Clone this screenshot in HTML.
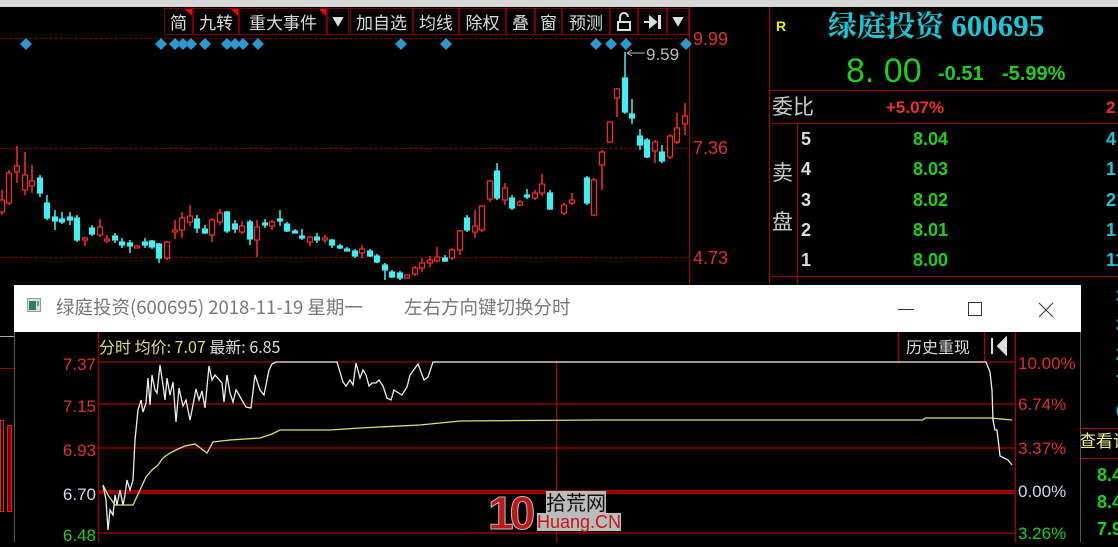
<!DOCTYPE html>
<html><head><meta charset="utf-8"><style>
*{margin:0;padding:0;box-sizing:border-box}
body{width:1118px;height:542px;overflow:hidden;background:#000;position:relative;font-family:"Liberation Sans","Noto Sans CJK SC",sans-serif}
.a{position:absolute;white-space:nowrap;line-height:1}
.btn{position:absolute;top:8px;height:27px;border:1px solid #7a0000;color:#ddd;font-size:17px;line-height:25px;text-align:center;font-family:"Noto Sans CJK SC",sans-serif}
.tri{position:absolute;top:0;right:0;width:0;height:0;border-top:7px solid #f00;border-left:7px solid transparent}
.cj{font-family:"Noto Sans CJK SC",sans-serif}
</style></head><body>
<div class="a" style="left:0;top:0;width:1118px;height:7px;background:#d8d8d8"></div>
<svg class="a" style="left:0;top:0" width="1118" height="542">
<g stroke="#a00" stroke-dasharray="2,3" stroke-width="1">
<line x1="0" y1="38.5" x2="689" y2="38.5"/><line x1="0" y1="148.5" x2="689" y2="148.5"/><line x1="0" y1="257.5" x2="689" y2="257.5"/>
</g>
<line x1="689.5" y1="7" x2="689.5" y2="290" stroke="#a00"/>
<line x1="769.5" y1="7" x2="769.5" y2="290" stroke="#a00"/>
<line x1="769" y1="90.5" x2="1118" y2="90.5" stroke="#a00"/>
<line x1="772" y1="123.5" x2="1118" y2="123.5" stroke="#a00"/>
<line x1="797.5" y1="123" x2="797.5" y2="290" stroke="#a00"/>
<line x1="772" y1="276.5" x2="1118" y2="276.5" stroke="#a00"/>
<g fill="#2a9ad0">
<path d="M0,-6L6,0L0,6L-6,0Z" transform="translate(26,44)"/>
<path d="M0,-6L6,0L0,6L-6,0Z" transform="translate(161,44)"/><path d="M0,-6L6,0L0,6L-6,0Z" transform="translate(175,44)"/><path d="M0,-6L6,0L0,6L-6,0Z" transform="translate(183,44)"/><path d="M0,-6L6,0L0,6L-6,0Z" transform="translate(191,44)"/><path d="M0,-6L6,0L0,6L-6,0Z" transform="translate(205,44)"/><path d="M0,-6L6,0L0,6L-6,0Z" transform="translate(227,44)"/><path d="M0,-6L6,0L0,6L-6,0Z" transform="translate(235,44)"/><path d="M0,-6L6,0L0,6L-6,0Z" transform="translate(243,44)"/><path d="M0,-6L6,0L0,6L-6,0Z" transform="translate(258,44)"/><path d="M0,-6L6,0L0,6L-6,0Z" transform="translate(401,44)"/><path d="M0,-6L6,0L0,6L-6,0Z" transform="translate(446,44)"/><path d="M0,-6L6,0L0,6L-6,0Z" transform="translate(596,44)"/><path d="M0,-6L6,0L0,6L-6,0Z" transform="translate(611,44)"/><path d="M0,-6L6,0L0,6L-6,0Z" transform="translate(626,44)"/><path d="M0,-6L6,0L0,6L-6,0Z" transform="translate(686,44)"/>
</g>
<g id="candles" stroke-width="1.5"></g>
<path d="M627,53H645M627,53l5,-3M627,53l5,3" stroke="#bbb" fill="none"/>
<text x="646" y="60" fill="#bbb" font-size="17" font-family="Liberation Sans">9.59</text>
</svg>
<div class="btn" style="left:164px;width:29px">简<i class="tri"></i></div>
<div class="btn" style="left:193px;width:46px">九转<i class="tri"></i></div>
<div class="btn" style="left:239px;width:88px">重大事件<i class="tri"></i></div>
<div class="btn" style="left:327px;width:22px;font-size:12px">▼</div>
<div class="btn" style="left:350px;width:63px">加自选</div>
<div class="btn" style="left:413px;width:46px">均线</div>
<div class="btn" style="left:459px;width:47px">除权</div>
<div class="btn" style="left:506px;width:29px">叠</div>
<div class="btn" style="left:535px;width:27px">窗</div>
<div class="btn" style="left:562px;width:48px">预测</div>
<div class="btn" style="left:610px;width:28px"><svg width="16" height="20" style="margin-top:3px"><path d="M4,9V5a4,4 0 0 1 8,0" stroke="#ddd" fill="none" stroke-width="2"/><rect x="2" y="10" width="12" height="8" stroke="#ddd" fill="none" stroke-width="2"/></svg></div>
<div class="btn" style="left:638px;width:29px"><svg width="20" height="16" style="margin-top:5px"><path d="M1,8H9M7,3l6,5l-6,5z" stroke="#ddd" fill="#ddd" stroke-width="2"/><rect x="15" y="1" width="3" height="14" fill="#ddd"/></svg></div>
<div class="btn" style="left:667px;width:22px;font-size:12px">▼</div>
<div class="a" style="left:693px;top:30px;color:#e03030;font-size:18px">9.99</div>
<div class="a" style="left:693px;top:139px;color:#e03030;font-size:18px">7.36</div>
<div class="a" style="left:693px;top:249px;color:#e03030;font-size:18px">4.73</div>
<div class="a" style="left:776px;top:19px;color:#ee0;font-size:14px;font-weight:bold">R</div>
<div class="a cj" style="left:828px;top:10px;color:#19c8d8;font-size:29px;font-weight:bold;font-family:'Noto Serif CJK SC',serif">绿庭投资 <span style="font-family:'Liberation Serif';font-size:31px">600695</span></div>
<div class="a" style="left:846px;top:54px;color:#1ed01e;font-size:34px">8.&nbsp;00</div>
<div class="a" style="left:938px;top:64px;color:#1ed01e;font-size:20px;font-weight:bold">-0.51</div>
<div class="a" style="left:1002px;top:64px;color:#1ed01e;font-size:20px;font-weight:bold">-5.99%</div>
<div class="a cj" style="left:772px;top:96px;color:#ccc;font-size:21px">委比</div>
<div class="a" style="left:886px;top:99px;color:#f03030;font-size:17px;font-weight:bold">+5.07%</div>
<div class="a" style="left:1106px;top:99px;color:#f03030;font-size:17px;font-weight:bold">2</div>
<div class="a cj" style="left:772px;top:162px;color:#ccc;font-size:21px">卖</div>
<div class="a cj" style="left:772px;top:211px;color:#ccc;font-size:21px">盘</div>
<div style="position:absolute;left:801px;top:124px;font-size:18px;font-weight:bold;line-height:30.3px">
<div style="color:#ddd;position:absolute;left:0">5<br>4<br>3<br>2<br>1</div>
<div style="color:#1ed01e;position:absolute;left:112px">8.04<br>8.03<br>8.02<br>8.01<br>8.00</div>
<div style="color:#19c8d8;position:absolute;left:305px">4<br>1<br>2<br>1<br>11</div>
</div>
<div class="a" style="left:1086px;top:282px;color:#19c8d8;font-size:18px;font-weight:bold;line-height:28.8px;width:40px;text-align:right;white-space:pre">3<br>3<br>2<br>7<br>6</div>
<div class="a" style="left:1080px;top:428px;width:38px;height:1px;background:#a00"></div>
<div class="a cj" style="left:1079px;top:431px;color:#ee8;font-size:17px">查看详</div>
<div class="a" style="left:1080px;top:458px;width:38px;height:1px;background:#a00"></div>
<div class="a" style="left:1097px;top:462px;color:#1ed01e;font-size:18px;font-weight:bold;line-height:27px">8.4<br>8.4<br>7.9</div>
<div class="a" style="left:0;top:336px;width:14px;height:1px;background:#aaa"></div>
<div class="a" style="left:0;top:368px;width:14px;height:1px;background:#a00"></div>
<div class="a" style="left:0;top:420px;width:4px;height:92px;border:1px solid #e02020"></div>
<div class="a" style="left:7px;top:425px;width:5px;height:87px;border:1px solid #e02020;background:#800"></div>
<div class="a" style="left:14px;top:285px;width:1067px;height:257px;background:#000;border-left:1px solid #555;border-right:1px solid #555"></div>
<div class="a" style="left:14px;top:285px;width:1067px;height:47px;background:#fff"></div>
<svg class="a" style="left:27px;top:298px" width="14" height="14"><rect x="0.5" y="0.5" width="13" height="13" fill="#ddd" stroke="#999"/><rect x="2" y="3" width="7" height="9" fill="#2a7a6a"/><rect x="10" y="3" width="2" height="5" fill="#4a8"/></svg>
<div class="a cj" style="left:56px;top:298px;color:#777;font-size:18.5px">绿庭投资(600695) 2018-11-19 星期一</div>
<div class="a cj" style="left:404px;top:298px;color:#777;font-size:18.5px">左右方向键切换分时</div>
<div class="a" style="left:898px;top:309px;width:16px;height:1px;background:#333"></div>
<div class="a" style="left:968px;top:302px;width:14px;height:14px;border:1px solid #333"></div>
<svg class="a" style="left:1038px;top:302px" width="16" height="16"><path d="M1,1L15,15M15,1L1,15" stroke="#333"/></svg>
<svg class="a" style="left:0;top:0" width="1118" height="542">
<g stroke="#a00" stroke-width="1.2">
<line x1="98" y1="362" x2="1015" y2="362"/><line x1="98" y1="404" x2="1015" y2="404"/><line x1="98" y1="448" x2="1015" y2="448"/><line x1="98" y1="533" x2="1015" y2="533"/>
<line x1="98.5" y1="332" x2="98.5" y2="542"/><line x1="1015.5" y1="332" x2="1015.5" y2="542"/><line x1="556.5" y1="362" x2="556.5" y2="542"/>
<line x1="898.5" y1="332" x2="898.5" y2="362"/><line x1="984.5" y1="332" x2="984.5" y2="362"/>
</g>
<line x1="98" y1="492" x2="1015" y2="492" stroke="#900" stroke-width="4"/>
<polyline fill="none" stroke="#e0e070" stroke-width="1.3" points="103,485 108,495 115,505 127,505 133,505 140,490 146,477 152,470 158,465 163,458 170,453 178,449 185,446 195,444 207,453 213,442 230,440 260,438 272,434 280,430 330,430 360,428 420,425 460,421 600,420 923,420 925,418 990,418 1012,420"/>
<polyline fill="none" stroke="#eee" stroke-width="1.3" points="103,485 106,500 108,530 110,510 113,515 115,495 117,505 120,490 123,505 125,495 127,480 130,490 133,480 135,440 138,410 141,400 143,412 146,403 148,378 150,405 152,375 155,390 157,393 160,365 163,385 165,400 167,378 170,395 173,382 176,422 179,388 183,406 186,400 190,420 193,405 196,389 199,400 202,391 205,408 209,366 212,380 215,375 222,383 224,402 227,375 230,393 233,402 236,390 238,393 243,402 246,407 251,408 255,375 260,390 264,395 269,370 272,364 276,362 337,362 343,382 346,386 350,380 353,385 356,363 360,378 363,370 366,375 369,386 372,383 376,383 379,380 383,386 387,398 391,400 394,390 397,392 402,395 407,387 410,375 418,364 424,380 428,377 433,362 986,362 990,372 992,390 993,420 995,430 997,430 999,447 1000,456 1004,458 1008,460 1012,465"/>
<path d="M992,338v16M1006,338l-8,8l8,8z" stroke="#ddd" fill="#ddd" stroke-width="2"/>
</svg>
<div class="a" style="left:44px;top:354px;width:52px;text-align:right;font-size:17px;line-height:21.5px">
<div style="position:absolute;right:0;top:0;color:#e03030">7.37</div>
<div style="position:absolute;right:0;top:42px;color:#e03030">7.15</div>
<div style="position:absolute;right:0;top:86px;color:#e03030">6.93</div>
<div style="position:absolute;right:0;top:130px;color:#cde">6.70</div>
<div style="position:absolute;right:0;top:171px;color:#1ed01e">6.48</div>
</div>
<div class="a cj" style="left:99px;top:338px;font-size:16px;color:#e0e070">分时 均价: 7.07 <span style="color:#ddd">最新: 6.85</span></div>
<div class="a cj" style="left:906px;top:338px;font-size:16px;color:#ddd">历史重现</div>
<div class="a" style="left:1018px;top:355px;font-size:17px;color:#e03030">10.00%</div>
<div class="a" style="left:1018px;top:396px;font-size:17px;color:#e03030">6.74%</div>
<div class="a" style="left:1018px;top:440px;font-size:17px;color:#e03030">3.37%</div>
<div class="a" style="left:1018px;top:483px;font-size:17px;color:#cde">0.00%</div>
<div class="a" style="left:1018px;top:525px;font-size:17px;color:#1ed01e">3.26%</div>
<div class="a" style="left:488px;top:490px;font-size:46px;font-weight:bold;color:#c01818;letter-spacing:-4px;-webkit-text-stroke:1px #bbb">10</div>
<div class="a cj" style="left:546px;top:491px;font-size:20px;color:#111;background:#bbb;line-height:22px">拾荒网</div>
<div class="a" style="left:537px;top:513px;font-size:18px;color:#c01818;background:#bbb;line-height:18px">Huang.CN</div>
<script>
var d=[[2,200,212,190,215,'r'],[9,173,203,170,205,'r'],[17,166,172,146,183,'r'],[25,175,190,152,195,'r'],[32,181,186,165,193,'r'],[40,178,193,175,197,'c'],[47,203,218,195,220,'c'],[55,217,221,210,230,'c'],[62,219,222,212,224,'c'],[70,217,220,212,225,'c'],[77,218,240,215,242,'c'],[85,238,240,237,246,'r'],[92,228,234,225,236,'c'],[100,227,235,219,237,'r'],[107,239,241,235,243,'r'],[115,236,240,233,243,'c'],[122,242,245,238,248,'c'],[130,243,246,240,253,'c'],[137,246,248,245,248,'r'],[145,242,245,238,248,'c'],[152,241,247,240,249,'c'],[159,244,258,243,263,'c'],[167,242,258,241,260,'r'],[175,230,232,220,239,'r'],[182,218,230,212,238,'r'],[190,216,222,205,226,'r'],[197,219,228,215,233,'c'],[205,229,233,225,234,'c'],[212,220,235,218,242,'r'],[220,213,222,209,225,'r'],[227,212,231,211,233,'c'],[235,224,229,220,233,'c'],[242,226,232,221,234,'r'],[250,222,239,220,245,'c'],[257,227,240,220,257,'r'],[265,223,225,219,228,'c'],[272,222,226,220,230,'r'],[280,219,221,210,226,'c'],[287,224,231,222,232,'c'],[295,231,232,229,233,'c'],[302,236,238,229,240,'c'],[310,237,242,236,246,'r'],[317,237,240,233,243,'c'],[325,238,240,235,243,'r'],[332,240,245,239,248,'c'],[340,246,248,244,249,'c'],[347,249,250,247,251,'c'],[355,251,256,249,258,'c'],[362,249,253,245,258,'r'],[370,251,256,249,257,'c'],[377,256,262,254,263,'c'],[385,265,270,263,280,'c'],[392,272,277,270,278,'c'],[400,273,278,271,280,'c'],[407,275,278,275,278,'r'],[415,268,274,266,276,'r'],[422,263,268,258,272,'r'],[430,260,263,256,267,'r'],[437,257,261,247,262,'r'],[445,258,261,255,262,'c'],[452,250,258,248,260,'r'],[460,231,250,230,255,'r'],[467,218,230,215,232,'c'],[475,226,232,210,238,'r'],[482,206,230,205,232,'r'],[490,181,199,180,202,'r'],[497,171,198,163,200,'c'],[505,188,200,183,205,'r'],[512,198,208,195,210,'c'],[520,202,205,200,206,'r'],[527,195,197,189,199,'c'],[535,193,198,190,200,'r'],[542,184,193,174,196,'r'],[550,193,209,190,210,'c'],[564,205,213,203,215,'r'],[572,200,203,193,205,'r'],[587,178,203,176,205,'c'],[594,180,215,178,216,'r'],[602,152,165,150,190,'r'],[610,122,142,122,143,'r'],[617,89,98,88,117,'r'],[625,78,112,52,114,'c'],[632,114,118,99,124,'c'],[640,136,145,129,150,'c'],[647,140,157,138,158,'c'],[655,142,151,140,163,'r'],[662,152,161,145,163,'c'],[670,136,157,134,159,'r'],[677,128,142,113,144,'r'],[685,116,124,103,135,'r']];
var s='';d.forEach(function(c){var col=c[5]=='r'?'#ff2a2a':'#40f0f0';var h=Math.max(2,c[2]-c[1]);
s+='<line x1="'+c[0]+'" y1="'+c[3]+'" x2="'+c[0]+'" y2="'+c[4]+'" stroke="'+col+'"/>';
s+='<rect x="'+(c[0]-2.5)+'" y="'+c[1]+'" width="5" height="'+h+'" fill="'+(c[5]=='r'?'#000':col)+'" stroke="'+col+'" stroke-width="1.2"/>';});
document.getElementById('candles').innerHTML=s;
</script>
</body></html>
